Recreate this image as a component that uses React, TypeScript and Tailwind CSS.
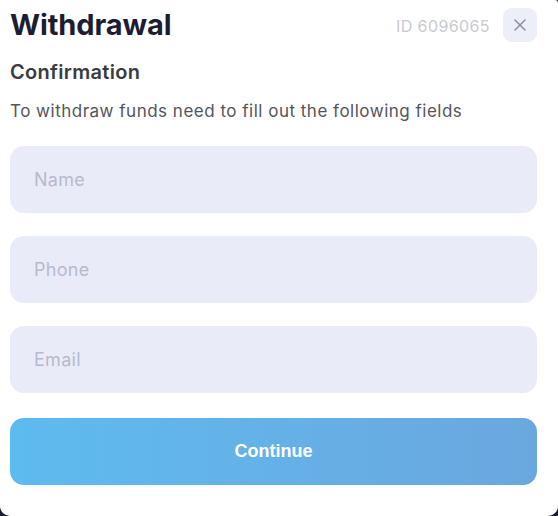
import { X } from 'lucide-react'

const fields = ['Name', 'Phone', 'Email']

export default function App() {
  return (
    <div className="w-[558px] h-[516px] bg-[#1b1d2e] font-['Inter',sans-serif]">
      <div className="h-full bg-white rounded-b-[10px] rounded-tr-[3px] pl-[10px] pr-[21px] pt-[7px]">
        {/* Header */}
        <div className="flex items-start justify-between">
          <h1 className="text-[29px] leading-[36px] font-bold text-[#1c1d33] tracking-[-0.1px]">Withdrawal</h1>
          <div className="flex items-center gap-[13px] mt-[1px]">
            <span className="text-[16px] tracking-[0.4px] text-[#c9cad3] mt-[1px]">ID 6096065</span>
            <button className="w-[34px] h-[34px] rounded-[9px] bg-[#eceef8] flex items-center justify-center text-[#8b8d9c]">
              <X size={20} strokeWidth={1.8} />
            </button>
          </div>
        </div>

        <h2 className="mt-[16px] text-[20px] leading-[26px] font-semibold tracking-[0.3px] text-[#3a3b40]">Confirmation</h2>
        <p className="mt-[15px] text-[17px] leading-[22px] tracking-[0.5px] text-[#54555c]">
          To withdraw funds need to fill out the following fields
        </p>

        {/* Fields */}
        <div className="mt-[24px] flex flex-col gap-[23px]">
          {fields.map((f) => (
            <input
              key={f}
              placeholder={f}
              className="h-[67px] w-full rounded-[14px] bg-[#e9ecf8] px-[24px] text-[18px] tracking-[0.3px] text-[#333] placeholder:text-[#b7bacb] outline-none"
            />
          ))}
        </div>

        <button className="mt-[25px] h-[67px] w-full rounded-[14px] bg-gradient-to-r from-[#5dbbef] to-[#6aa7df] text-white text-[18px] font-bold font-['Liberation_Sans',sans-serif]">
          Continue
        </button>
      </div>
    </div>
  )
}
